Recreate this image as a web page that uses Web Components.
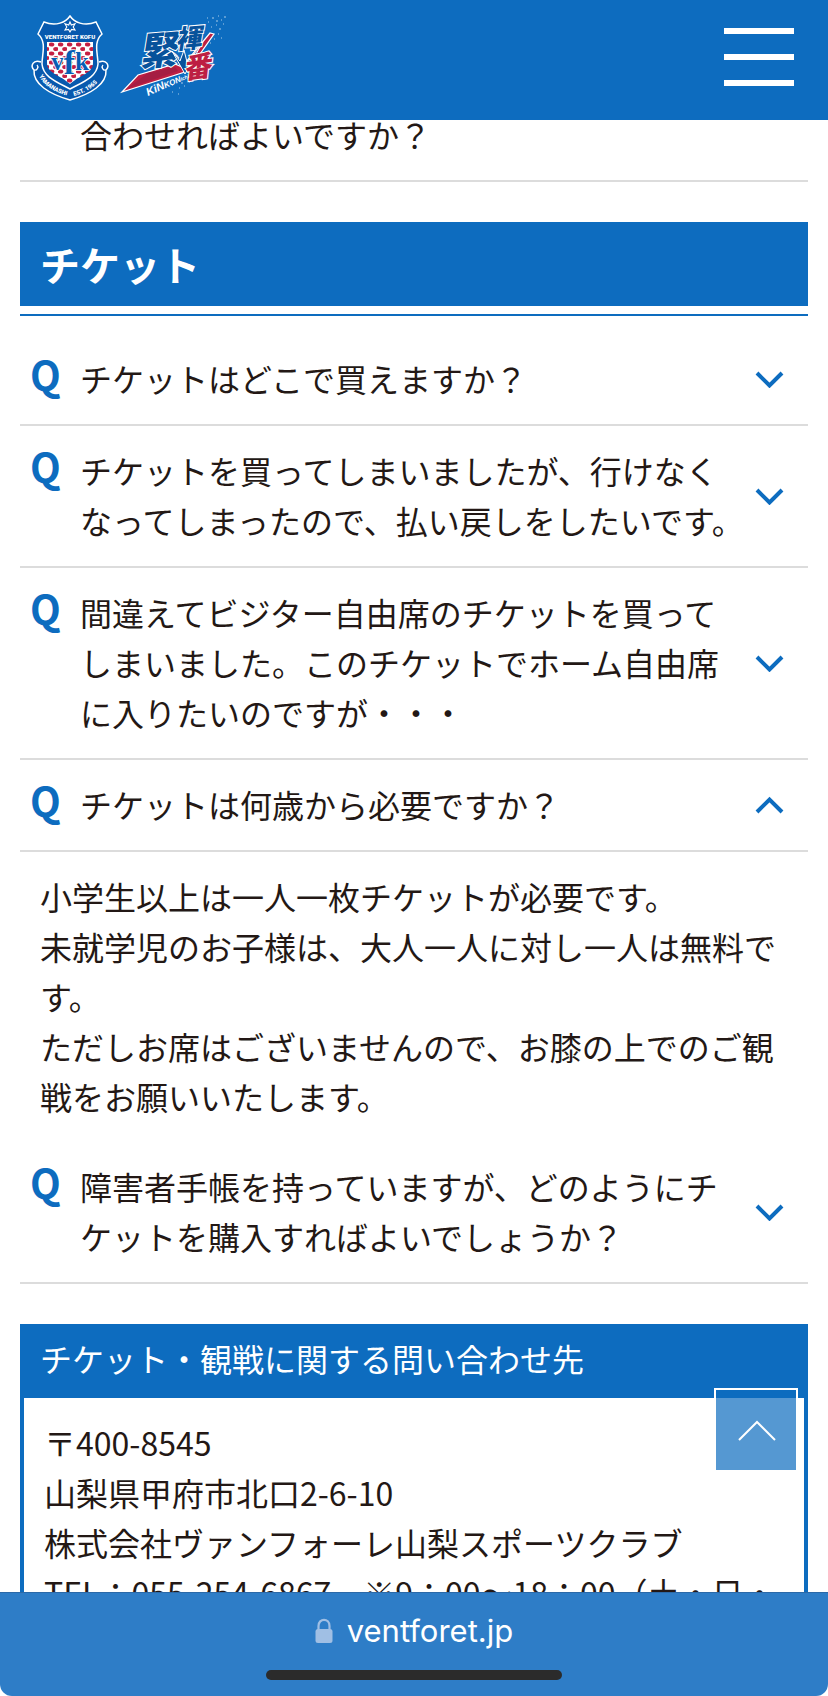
<!DOCTYPE html>
<html lang="ja">
<head>
<meta charset="utf-8">
<meta name="viewport" content="width=device-width, initial-scale=1">
<title>よくあるご質問</title>
<style>
  :root {
    --blue: #0d6cbf;
    --ink: #231815;
    --line: #dcdcdc;
  }
  body {
    margin: 0;
    color: var(--ink);
    background: #fff;
    font: 32px/50px "Noto Sans CJK JP", sans-serif;
  }
</style>
</head>
<body>
<faq-page>
  <site-header slot="header"></site-header>

  <faq-item><br>合わせればよいですか？</faq-item>

  <section-title>チケット</section-title>
  <faq-item>チケットはどこで買えますか？</faq-item>
  <faq-item>チケットを買ってしまいましたが、行けなく<br>なってしまったので、払い戻しをしたいです。</faq-item>
  <faq-item>間違えてビジター自由席のチケットを買って<br>しまいました。このチケットでホーム自由席<br>に入りたいのですが・・・</faq-item>
  <faq-item open>チケットは何歳から必要ですか？
    <div slot="answer">小学生以上は一人一枚チケットが必要です。<br>未就学児のお子様は、大人一人に対し一人は無料です。<br>ただしお席はございませんので、お膝の上でのご観戦をお願いいたします。</div>
  </faq-item>
  <faq-item>障害者手帳を持っていますが、どのようにチ<br>ケットを購入すればよいでしょうか？</faq-item>

  <contact-box>
    <span slot="title">チケット・観戦に関する問い合わせ先</span>
    〒400-8545<br>
    山梨県甲府市北口2-6-10<br>
    株式会社ヴァンフォーレ山梨スポーツクラブ<br>
    TEL：055-254-6867　※9：00〜18：00（土・日・
  </contact-box>

  <page-top slot="overlay"></page-top>
  <browser-bar slot="overlay">ventforet.jp</browser-bar>
</faq-page>

<script>
class FaqPage extends HTMLElement {
  constructor () {
    super();
    this.attachShadow({ mode: 'open' }).innerHTML = `
      <style>
        :host {
          display: block;
          height: 100vh;
          overflow: hidden;
        }
        main {
          box-sizing: border-box;
          height: 100%;
          overflow-y: auto;
          scrollbar-width: none;
          padding: 40px 20px 104px;
        }
      </style>
      <slot name='header'></slot>
      <main><slot></slot></main>
      <slot name='overlay'></slot>`;
    this.addEventListener('page-top', () => this.scrollToTop());
  }

  scrollToTop () {
    this.shadowRoot.querySelector('main').scrollTo({ top: 0, behavior: 'smooth' });
  }
}

class ClubCrest extends HTMLElement {
  constructor () {
    super();
    this.attachShadow({ mode: 'open' }).innerHTML = `
      <style>
        :host { display: block; }
        svg { display: block; overflow: visible; }
        text { font-family: Roboto, sans-serif; font-weight: 900; fill: #fff; }
        .vfk {
          font: bold 25px "Liberation Serif", serif;
          fill: #075db4;
          stroke: #fff;
          stroke-width: 1.5;
          paint-order: stroke;
        }
      </style>
      <svg width='80' height='88' viewBox='0 0 80 88' role='img' aria-label='VENTFORET KOFU'>
        <defs>
          <pattern id='check' width='9' height='9' patternUnits='userSpaceOnUse' x='1' y='1'>
            <rect width='9' height='9' fill='#fff'/>
            <ellipse cx='2.500' cy='2.500' rx='2.800' ry='2' fill='#c51f43'/>
            <ellipse cx='7' cy='7' rx='2.800' ry='2' fill='#c51f43'/>
          </pattern>
          <path id='left-ribbon' d='M9 62Q17 77 39 82'/>
          <path id='right-ribbon' d='M44 82Q63 77 74 61'/>
        </defs>
        <path d='M11 48C3 45 0 52 4 56C3 70 19 80 40 86C61 80 77 70 76 56C80 52 77 45 69 48' fill='#0759ae' stroke='#fff' stroke-width='1.5'/>
        <path d='M4 56C7 57 9 53 7 51M76 56C73 57 71 53 73 51' fill='none' stroke='#fff' stroke-width='1.3'/>
        <path d='M40 2C36 8 26 13 14 8L8 20C17 28 12 40 12 50C13 63 27 68 40 75C53 68 67 63 68 50C68 40 63 28 72 20L66 8C54 13 44 8 40 2Z' fill='#0759ae' stroke='#fff' stroke-width='1.5'/>
        <path d='M17 28H63V49C63 59 50 61 40 70C30 61 17 59 17 49Z' fill='url(#check)'/>
        <path d='M40 8L41.3 11L45 9.8L43.2 13L45 16L41.5 15.4L40 18L38.5 15.4L35 16L36.8 13L35 9.8L38.7 11Z' fill='#0759ae' stroke='#fff' stroke-width='1.1'/>
        <text x='40' y='25' font-size='6' text-anchor='middle'>VENTFORET KOFU</text>
        <text class='vfk' x='40' y='56' text-anchor='middle'>v<tspan font-size='34' dy='4'>f</tspan><tspan dy='-4'>k</tspan></text>
        <text font-size='6'><textPath href='#left-ribbon'>YAMANASHI</textPath></text>
        <text font-size='6'><textPath href='#right-ribbon'>EST. 1965</textPath></text>
      </svg>`;
  }
}

class SloganLogo extends HTMLElement {
  constructor () {
    super();
    this.attachShadow({ mode: 'open' }).innerHTML = `
      <style>
        :host { display: block; }
        svg { display: block; overflow: visible; }
        .kanji {
          font-family: "Noto Sans CJK JP", sans-serif;
          font-style: italic;
          font-weight: 900;
          stroke: #fff;
          stroke-width: 2;
          paint-order: stroke;
        }
      </style>
      <svg width='108' height='84' viewBox='0 0 108 84' role='img' aria-label='緊褌一番'>
        <path d='M2 78L18 61L55 50L62 53L90 19L94 20L68 57Z' fill='#bd1f43' stroke='#fff' stroke-width='1.2'/>
        <path d='M6 75L28 59L55 53L58 57Z' fill='#a51e43'/>
        <text class='kanji' font-size='38' fill='#07529b' transform='translate(20 52) rotate(-5)'>緊</text>
        <text class='kanji' font-size='26' fill='#07529b' transform='translate(56 35) rotate(-5)'>褌</text>
        <path d='M52 37L60 47L64 36L67 48L80 33L65 60Z' fill='#07529b' stroke='#fff' stroke-width='1'/>
        <text class='kanji' font-size='28' fill='#bd1f43' transform='translate(64 65) rotate(-8)'>番</text>
        <text font-size='11' font-style='italic' font-weight='bold' font-family='Liberation Sans, sans-serif' fill='#fff' transform='translate(28 82) rotate(-24)'>KiN<tspan font-size='8'>KON</tspan><tspan font-size='5'>Ichi</tspan></text>
        <path d='M88 8h1M92 4h2M96 11h1M101 6h1M104 3h2M91 13h1M98 2h1M87 4h1M99 15h2M96 7h2M103 10h1M98 20h1M94 25h1M101 24h1M90 29h1M56 66h1M61 69h2M67 65h1M52 71h1M59 74h1M64 72h1M69 68h1M52 78h1M58 80h1' stroke='#fff' stroke-width='1' opacity='.65'/>
      </svg>`;
  }
}

class SiteHeader extends HTMLElement {
  constructor () {
    super();
    this.attachShadow({ mode: 'open' }).innerHTML = `
      <style>
        :host {
          position: fixed;
          inset: 0 0 auto;
          z-index: 2;
          box-sizing: border-box;
          height: 120px;
          padding: 14px 34px 16px 30px;
          display: flex;
          justify-content: space-between;
          background: var(--blue);
        }
        a {
          display: flex;
          gap: 10px;
          text-decoration: none;
        }
        button {
          display: flex;
          flex-direction: column;
          gap: 20px;
          width: 70px;
          height: 86px;
          padding: 14px 0 0;
          border: 0;
          background: none;
        }
        button span {
          width: 100%;
          height: 6px;
          background: #fff;
        }
      </style>
      <a href='#'><club-crest></club-crest><slogan-logo></slogan-logo></a>
      <button type='button' aria-label='メニュー'><span></span><span></span><span></span></button>`;
  }
}

class SectionTitle extends HTMLElement {
  constructor () {
    super();
    this.attachShadow({ mode: 'open' }).innerHTML = `
      <style>
        :host {
          display: block;
          margin: 40px 0 18px;
          padding-bottom: 8px;
          border-bottom: 2px solid var(--blue);
        }
        h2 {
          margin: 0;
          padding: 12px 20px;
          background: var(--blue);
          color: #fff;
          font-size: 40px;
          line-height: 60px;
        }
      </style>
      <h2><slot></slot></h2>`;
  }
}

class FaqItem extends HTMLElement {
  constructor () {
    super();
    this.attachShadow({ mode: 'open' }).innerHTML = `
      <style>
        :host { display: block; }
        h3 { margin: 0; font: inherit; }
        button {
          display: flex;
          align-items: center;
          width: 100%;
          padding: 19px 24px 21px 10px;
          border: 0;
          border-bottom: 2px solid var(--line);
          background: none;
          color: inherit;
          font: inherit;
          text-align: left;
        }
        .mark {
          align-self: flex-start;
          flex: 0 0 50px;
          color: var(--blue);
          font-size: 40px;
          font-weight: 700;
          line-height: 42px;
        }
        .question { flex: 1; white-space: nowrap; }
        svg { flex: none; }
        .answer { padding: 19px 20px 21px; }
        :host([open]) path { transform: translateY(23px) scaleY(-1); }
        :host(:not([open])) .answer { display: none; }
      </style>
      <h3>
        <button type='button' aria-controls='answer'>
          <span class='mark'>Q</span>
          <span class='question'><slot></slot></span>
          <svg width='30' height='20' viewBox='0 0 30 20' aria-hidden='true'>
            <path d='M3 5L15.500 17.500L28 5' fill='none' stroke='#0d6cbf' stroke-width='4'/>
          </svg>
        </button>
      </h3>
      <div class='answer' id='answer'><slot name='answer'></slot></div>`;
    this.button = this.shadowRoot.querySelector('button');
    this.button.addEventListener('click', () => this.toggleAttribute('open'));
  }

  static get observedAttributes () {
    return ['open'];
  }

  connectedCallback () {
    this.update();
  }

  attributeChangedCallback () {
    this.update();
  }

  update () {
    this.button.setAttribute('aria-expanded', this.hasAttribute('open'));
  }
}

class ContactBox extends HTMLElement {
  constructor () {
    super();
    this.attachShadow({ mode: 'open' }).innerHTML = `
      <style>
        :host {
          display: block;
          margin-top: 40px;
          border: 4px solid var(--blue);
        }
        h3 {
          margin: 0;
          padding: 5px 16px 15px;
          background: var(--blue);
          color: #fff;
          font: inherit;
        }
        address {
          padding: 19px 20px 21px;
          font-style: normal;
        }
      </style>
      <h3><slot name='title'></slot></h3>
      <address><slot></slot></address>`;
  }
}

class PageTop extends HTMLElement {
  constructor () {
    super();
    this.attachShadow({ mode: 'open' }).innerHTML = `
      <style>
        :host {
          position: fixed;
          right: 30px;
          bottom: 224px;
          z-index: 1;
        }
        button {
          display: grid;
          place-items: center;
          width: 84px;
          height: 84px;
          padding: 0;
          border: 2px solid #fff;
          background: rgba(13, 108, 191, .7);
          background-clip: padding-box;
        }
      </style>
      <button type='button' aria-label='ページの先頭へ'>
        <svg width='40' height='24' viewBox='0 0 40 24' aria-hidden='true'>
          <path d='M3 22L21 4L39 22' fill='none' stroke='#fff' stroke-width='2'/>
        </svg>
      </button>`;
    this.shadowRoot.querySelector('button').addEventListener('click', () => {
      this.dispatchEvent(new CustomEvent('page-top', { bubbles: true }));
    });
  }
}

class BrowserBar extends HTMLElement {
  constructor () {
    super();
    this.attachShadow({ mode: 'open' }).innerHTML = `
      <style>
        :host {
          position: fixed;
          inset: auto 0 0;
          z-index: 2;
          background: #fff;
        }
        .bar {
          box-sizing: border-box;
          height: 104px;
          padding: 18px 0 16px;
          display: flex;
          flex-direction: column;
          align-items: center;
          justify-content: space-between;
          border-top: 1px solid #2b69a8;
          border-radius: 0 0 12px 12px;
          background: #2e7dc7;
          color: #fff;
          font: 31px/40px Inter, sans-serif;
        }
        .url {
          display: flex;
          align-items: center;
          gap: 14px;
        }
        .home {
          width: 296px;
          height: 10px;
          border-radius: 5px;
          background: #2b2b2b;
        }
      </style>
      <div class='bar'>
        <div class='url'>
          <svg width='18' height='26' viewBox='0 0 18 26' aria-hidden='true'>
            <rect x='.5' y='11' width='17' height='14' rx='2.5' fill='#a0bfe4'/>
            <path d='M3.5 12V8C3.5 -.2 14.5 -.2 14.5 8V12' fill='none' stroke='#a0bfe4' stroke-width='2.2'/>
          </svg>
          <slot></slot>
        </div>
        <div class='home'></div>
      </div>`;
  }
}

customElements.define('club-crest', ClubCrest);
customElements.define('slogan-logo', SloganLogo);
customElements.define('site-header', SiteHeader);
customElements.define('section-title', SectionTitle);
customElements.define('faq-item', FaqItem);
customElements.define('contact-box', ContactBox);
customElements.define('page-top', PageTop);
customElements.define('browser-bar', BrowserBar);
customElements.define('faq-page', FaqPage);
</script>
</body>
</html>
